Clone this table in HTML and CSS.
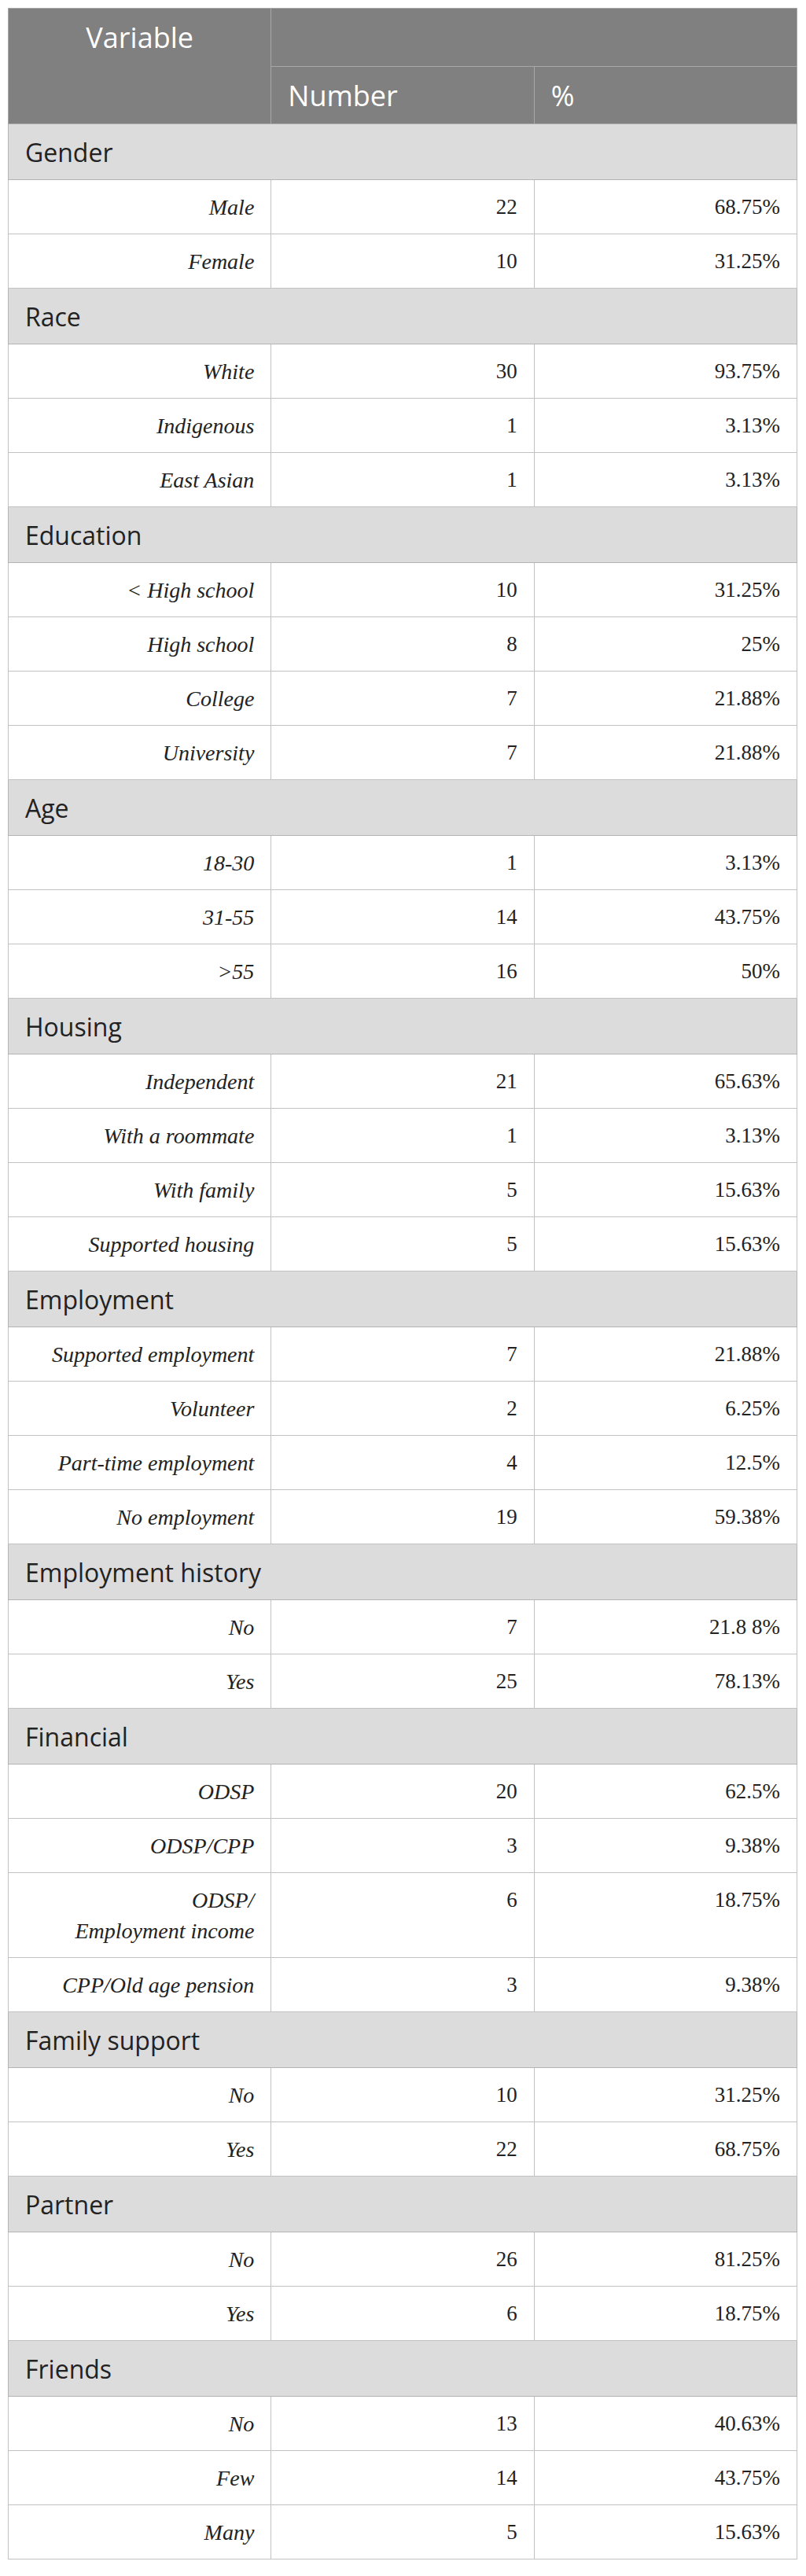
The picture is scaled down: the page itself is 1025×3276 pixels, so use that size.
FILE: index.html
```html
<!DOCTYPE html>
<html lang="en">
<head>
<meta charset="utf-8">
<title>Participant characteristics</title>
<link rel="stylesheet" href="styles.css">
</head>
<body>
<div class="page">
<table class="data">
  <colgroup><col class="c1"><col class="c2"><col class="c3"></colgroup>
  <thead>
    <tr class="h1">
      <th class="var" rowspan="2">Variable</th>
      <th class="blank" colspan="2"></th>
    </tr>
    <tr class="h2">
      <th>Number</th>
      <th>%</th>
    </tr>
  </thead>
  <tbody>
    <tr class="sec"><td colspan="3">Gender</td></tr>
    <tr><td class="lbl">Male</td><td class="num">22</td><td class="num">68.75%</td></tr>
    <tr><td class="lbl">Female</td><td class="num">10</td><td class="num">31.25%</td></tr>

    <tr class="sec"><td colspan="3">Race</td></tr>
    <tr><td class="lbl">White</td><td class="num">30</td><td class="num">93.75%</td></tr>
    <tr><td class="lbl">Indigenous</td><td class="num">1</td><td class="num">3.13%</td></tr>
    <tr><td class="lbl">East Asian</td><td class="num">1</td><td class="num">3.13%</td></tr>

    <tr class="sec"><td colspan="3">Education</td></tr>
    <tr><td class="lbl">&lt; High school</td><td class="num">10</td><td class="num">31.25%</td></tr>
    <tr><td class="lbl">High school</td><td class="num">8</td><td class="num">25%</td></tr>
    <tr><td class="lbl">College</td><td class="num">7</td><td class="num">21.88%</td></tr>
    <tr><td class="lbl">University</td><td class="num">7</td><td class="num">21.88%</td></tr>

    <tr class="sec"><td colspan="3">Age</td></tr>
    <tr><td class="lbl">18-30</td><td class="num">1</td><td class="num">3.13%</td></tr>
    <tr><td class="lbl">31-55</td><td class="num">14</td><td class="num">43.75%</td></tr>
    <tr><td class="lbl">&gt;55</td><td class="num">16</td><td class="num">50%</td></tr>

    <tr class="sec"><td colspan="3">Housing</td></tr>
    <tr><td class="lbl">Independent</td><td class="num">21</td><td class="num">65.63%</td></tr>
    <tr><td class="lbl">With a roommate</td><td class="num">1</td><td class="num">3.13%</td></tr>
    <tr><td class="lbl">With family</td><td class="num">5</td><td class="num">15.63%</td></tr>
    <tr><td class="lbl">Supported housing</td><td class="num">5</td><td class="num">15.63%</td></tr>

    <tr class="sec"><td colspan="3">Employment</td></tr>
    <tr><td class="lbl">Supported employment</td><td class="num">7</td><td class="num">21.88%</td></tr>
    <tr><td class="lbl">Volunteer</td><td class="num">2</td><td class="num">6.25%</td></tr>
    <tr><td class="lbl">Part-time employment</td><td class="num">4</td><td class="num">12.5%</td></tr>
    <tr><td class="lbl">No employment</td><td class="num">19</td><td class="num">59.38%</td></tr>

    <tr class="sec"><td colspan="3">Employment history</td></tr>
    <tr><td class="lbl">No</td><td class="num">7</td><td class="num">21.8 8%</td></tr>
    <tr><td class="lbl">Yes</td><td class="num">25</td><td class="num">78.13%</td></tr>

    <tr class="sec"><td colspan="3">Financial</td></tr>
    <tr><td class="lbl">ODSP</td><td class="num">20</td><td class="num">62.5%</td></tr>
    <tr><td class="lbl">ODSP/CPP</td><td class="num">3</td><td class="num">9.38%</td></tr>
    <tr><td class="lbl">ODSP/<br>Employment income</td><td class="num">6</td><td class="num">18.75%</td></tr>
    <tr><td class="lbl">CPP/Old age pension</td><td class="num">3</td><td class="num">9.38%</td></tr>

    <tr class="sec"><td colspan="3">Family support</td></tr>
    <tr><td class="lbl">No</td><td class="num">10</td><td class="num">31.25%</td></tr>
    <tr><td class="lbl">Yes</td><td class="num">22</td><td class="num">68.75%</td></tr>

    <tr class="sec"><td colspan="3">Partner</td></tr>
    <tr><td class="lbl">No</td><td class="num">26</td><td class="num">81.25%</td></tr>
    <tr><td class="lbl">Yes</td><td class="num">6</td><td class="num">18.75%</td></tr>

    <tr class="sec"><td colspan="3">Friends</td></tr>
    <tr><td class="lbl">No</td><td class="num">13</td><td class="num">40.63%</td></tr>
    <tr><td class="lbl">Few</td><td class="num">14</td><td class="num">43.75%</td></tr>
    <tr><td class="lbl">Many</td><td class="num">5</td><td class="num">15.63%</td></tr>
  </tbody>
</table>
</div>
</body>
</html>
```
FILE: styles.css
```css
html, body {
  margin: 0;
  padding: 0;
  background: #ffffff;
}

.page {
  padding: 10px 10px 0 10px;
}

.data {
  width: 1004px;
  border-collapse: collapse;
  table-layout: fixed;
  color: #222222;
}

.data col.c1,
.data col.c2,
.data col.c3 {
  width: 33.333%;
}

.data th {
  background: #808080;
  color: #ffffff;
  font-family: "Open Sans", "Noto Sans", sans-serif;
  font-weight: 400;
  font-size: 36px;
  line-height: 49px;
  text-align: left;
  padding: 0 21px;
  border: 1px solid #a8a8a8;
}

.data .h1 th {
  height: 74px;
  box-sizing: border-box;
}

.data th.var {
  text-align: center;
  vertical-align: top;
  padding-top: 12px;
}

.data .h2 th {
  height: 73px;
  box-sizing: border-box;
  vertical-align: middle;
}

.data td {
  border: 1px solid #c2c2c2;
  padding: 15px 21px 14px 21px;
  vertical-align: top;
  font-family: "Liberation Serif", "Times New Roman", serif;
  font-size: 27px;
  line-height: 39px;
}

.data td.lbl {
  text-align: right;
  font-style: italic;
  font-size: 28px;
}

.data td.num {
  text-align: right;
}

.data .sec td {
  background: #dcdcdc;
  font-family: "Open Sans", "Noto Sans", sans-serif;
  font-size: 32px;
  line-height: 41px;
  padding: 15px 21px 14px 21px;
  border-color: #b4b4b4;
  color: #222222;
  text-align: left;
}
```
